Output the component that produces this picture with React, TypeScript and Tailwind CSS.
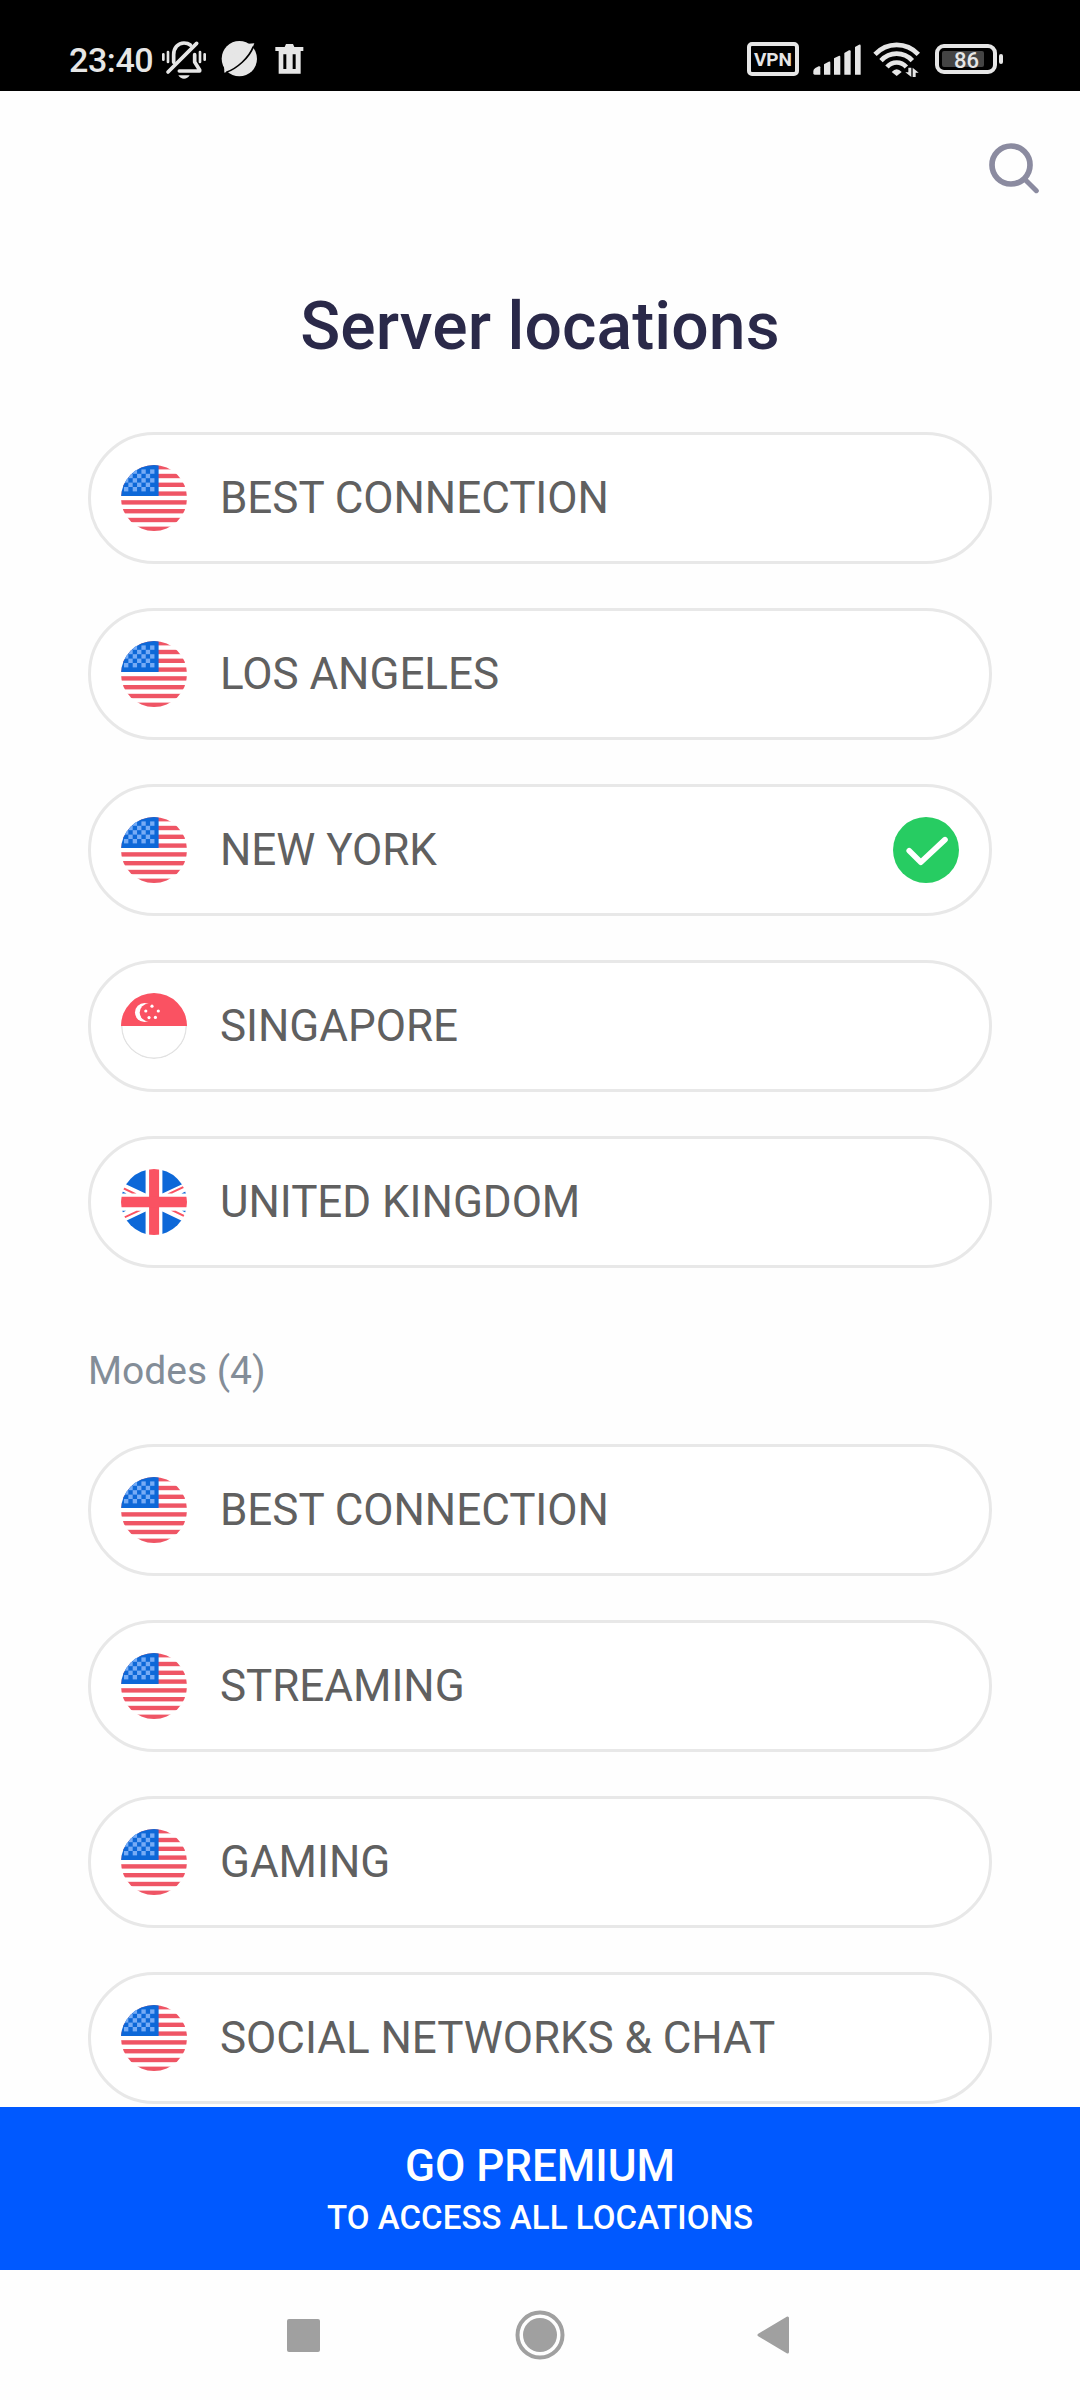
import React from 'react';

type Country = 'us' | 'sg' | 'uk';

interface Location {
  name: string;
  country: Country;
  selected?: boolean;
}

const locations: Location[] = [
  { name: 'BEST CONNECTION', country: 'us' },
  { name: 'LOS ANGELES', country: 'us' },
  { name: 'NEW YORK', country: 'us', selected: true },
  { name: 'SINGAPORE', country: 'sg' },
  { name: 'UNITED KINGDOM', country: 'uk' },
];

const modes: Location[] = [
  { name: 'BEST CONNECTION', country: 'us' },
  { name: 'STREAMING', country: 'us' },
  { name: 'GAMING', country: 'us' },
  { name: 'SOCIAL NETWORKS & CHAT', country: 'us' },
];

export default function App() {
  return (
    <div className="flex h-[2400px] w-[1080px] flex-col overflow-hidden bg-[#fefefe] font-['Roboto',sans-serif]">
      <StatusBar />

      {/* Toolbar */}
      <header className="flex h-[149px] shrink-0 justify-end pt-[52px] pr-[40px]">
        <svg className="h-[51px] w-[52px]" viewBox="0 0 52 51" fill="none" stroke="#8b8ba0" strokeLinecap="round">
          <circle cx="23" cy="22" r="19" strokeWidth="5.7" />
          <path d="M37.5 37 L48.3 47.7" strokeWidth="5" />
        </svg>
      </header>

      <main className="flex min-h-0 flex-1 flex-col overflow-hidden px-[88px]">
        <h1 className="mt-12 shrink-0 text-center text-[66px] leading-[78px] font-medium tracking-[0.1px] text-[#2a2949]">
          Server locations
        </h1>
        <div className="mt-[66px] flex flex-col gap-11">
          {locations.map((item) => (
            <LocationRow key={item.name} item={item} />
          ))}
        </div>

        <h2 className="mt-[77px] shrink-0 text-[39px] leading-[52px] text-[#838d98]">Modes (4)</h2>
        <div className="mt-[47px] flex flex-col gap-11">
          {modes.map((item) => (
            <LocationRow key={item.name} item={item} />
          ))}
        </div>
      </main>

      {/* Premium banner */}
      <button className="flex h-[163px] shrink-0 flex-col items-center bg-[#0059ff] pt-[33px] font-medium text-white">
        <span className="text-[44px] leading-[52px]">GO PREMIUM</span>
        <span className="mt-[6px] text-[33px] leading-[40px] tracking-[0.08px]">TO ACCESS ALL LOCATIONS</span>
      </button>

      <NavBar />
    </div>
  );
}

function LocationRow({ item }: { item: Location }) {
  return (
    <div className="flex h-[132px] shrink-0 items-center rounded-full border-3 border-[#e8e8e8] bg-white px-[30px]">
      <Flag country={item.country} />
      <span className="ml-[33px] flex-1 text-[44px] leading-[52px] tracking-[-0.04px] text-[#606060]">{item.name}</span>
      {item.selected && (
        <svg className="size-[66px]" viewBox="0 0 66 66" fill="none">
          <circle cx="33" cy="33" r="33" fill="#27cc62" />
          <path
            d="M16.2 33.8 L27.8 45.2 L52 22.6"
            stroke="white"
            strokeWidth="5.6"
            strokeLinecap="round"
            strokeLinejoin="round"
          />
        </svg>
      )}
    </div>
  );
}

function Flag({ country }: { country: Country }) {
  return (
    <div className="size-[66px] overflow-hidden rounded-full">
      {country === 'us' && <UsFlag />}
      {country === 'sg' && <SgFlag />}
      {country === 'uk' && <UkFlag />}
    </div>
  );
}

function UsFlag() {
  return (
    <svg className="size-full" viewBox="0 0 66 66">
      <rect width="66" height="66" fill="#fff" />
      {[0, 1, 2, 3, 4, 5, 6, 7].map((i) => (
        <rect key={i} y={i * 8.8} width="66" height="4.4" fill="#ef5565" />
      ))}
      <rect width="37.6" height="31" fill="#0d68d8" />
      {/* stars as a checkerboard */}
      {[0, 1, 2, 3, 4].map((row) =>
        (row % 2 === 0 ? [0, 2, 4, 6] : [1, 3, 5]).map((col) => (
          <rect key={`${row}-${col}`} x={3 + col * 4.35} y={4.4 + row * 4.4} width="4.35" height="4.4" fill="#76abf5" />
        ))
      )}
    </svg>
  );
}

function SgFlag() {
  return (
    <svg className="size-full" viewBox="0 0 66 66">
      <rect width="66" height="66" fill="#fff" />
      <rect width="66" height="33" fill="#fa5262" />
      <circle cx="23.6" cy="19.5" r="9.6" fill="#fff" />
      <circle cx="27.6" cy="19.5" r="8.9" fill="#fa5262" />
      <g fill="#fff">
        <circle cx="31" cy="13.2" r="1.6" />
        <circle cx="37.3" cy="18" r="1.6" />
        <circle cx="24.8" cy="18" r="1.6" />
        <circle cx="28" cy="24.6" r="1.6" />
        <circle cx="34.4" cy="24.4" r="1.6" />
      </g>
      <path d="M0.7 33 A32.3 32.3 0 0 0 65.3 33" fill="none" stroke="#e2e2e2" strokeWidth="1.4" />
    </svg>
  );
}

function UkFlag() {
  return (
    <svg className="size-full" viewBox="0 0 66 66">
      <rect width="66" height="66" fill="#fff" />
      <g fill="#0d68d8">
        <path d="M24.6 0 V24.6 L0 13 V0Z M41.4 0 V24.6 L66 13 V0Z" />
        <path d="M24.6 66 V42.6 L0 54.2 V66Z M41.4 66 V42.6 L66 54.2 V66Z" />
        <path d="M0 21.8 L5.6 24.4 H0Z M66 21.8 L60.4 24.4 H66Z M0 44.2 L5 41.8 H0Z M66 44.2 L61 41.8 H66Z" />
      </g>
      <g fill="#fa5262">
        <path d="M0 17 L15.6 24.4 H11 L0 19.2Z M66 15.2 L46.4 24.4 H51 L66 17.4Z" />
        <path d="M0 51 L20 41.8 H15.4 L0 48.9Z M66 49.4 L50 41.8 H54.6 L66 47.2Z" />
        <path d="M28.1 0 H38.1 V66 H28.1Z" />
        <path d="M0 27.8 H66 V38.2 H0Z" />
      </g>
    </svg>
  );
}

function StatusBar() {
  return (
    <div className="flex h-[91px] shrink-0 items-start justify-between bg-black pt-[40px] pr-[77px] pl-[69px] text-[#e6e6e6]">
      <div className="flex h-10 items-center">
        <span className="w-[93px] text-[34px] leading-10 font-medium tracking-[-0.4px]">23:40</span>

        {/* Muted bell */}
        <svg className="h-10 w-11" viewBox="336 60 132 120" fill="none" stroke="currentColor" strokeLinecap="round">
          <path d="M371 127 V104 C371 84 384 69 402 69 C410 69 416 71 421 75" strokeWidth="11" />
          <path d="M434 104 V126 L449 150 V153 H388" strokeWidth="11" strokeLinejoin="round" />
          <path d="M354 156 L440 70" strokeWidth="11" />
          <path d="M385 166 H419 C415 173 409 176 402 176 C395 176 389 173 385 166Z" fill="currentColor" stroke="none" />
          <path d="M340 103 V119 M354 96 V126 M450 96 V126 M464 103 V119" strokeWidth="8" />
        </svg>

        {/* Planet */}
        <svg className="ml-[15px] h-10 w-[37px]" viewBox="512 60 111 120">
          <circle cx="567" cy="116" r="53" fill="currentColor" />
          <path d="M521 126 L522 158 L550 148 L600 100 L612 70 L585 72Z" fill="currentColor" />
          <path d="M528 157 C560 145 596 114 609 80" fill="none" stroke="black" strokeWidth="5" />
        </svg>

        {/* Trash */}
        <svg className="ml-[17px] h-10 w-[30px]" viewBox="674 60 90 120">
          <path d="M675 81 H703 L707 72 H728 L732 81 H759 V93 H751 V161 H685 V93 H675Z" fill="currentColor" />
          <path d="M699 103 H708 V147 H699Z M727 103 H736 V147 H727Z" fill="black" />
        </svg>
      </div>

      <div className="flex h-10 items-center">
        <div className="mb-[2px] flex h-[34px] w-[52px] items-center justify-center rounded-[5px] border-4 border-current pt-px text-[19px] leading-none font-bold">
          VPN
        </div>

        {/* Signal */}
        <svg className="ml-[14px] h-10 w-12" viewBox="249 60 144 120" fill="currentColor">
          <path d="M250 153 Q250 148 256 144 L266 139 Q271 138 271 142 V164 H254 Q250 164 250 160Z" />
          <path d="M282 133 L296 125 Q301 123 301 128 V164 H282Z" />
          <path d="M312 115 L326 108 Q331 106 331 111 V164 H312Z" />
          <path d="M343 99 L357 91 Q362 89 362 94 V164 H343Z" />
          <path d="M375 81 L387 74 Q392 72 392 77 V164 H375Z" />
        </svg>

        {/* Wifi with traffic arrows */}
        <svg className="ml-[12px] h-10 w-[48px]" viewBox="430 60 144 120" fill="none" stroke="currentColor" strokeWidth="14">
          <path d="M436 103 C472 65 530 65 566 103" />
          <path d="M454 122 C480 94 522 94 548 122" />
          <path d="M472 141 C488 123 514 123 530 141" />
          <path d="M486 156 Q501 140 516 156 L501 168Z" fill="currentColor" stroke="none" />
          <path d="M545 143 V171 L527 157 H536 V143Z M549 171 V143 L567 158 H558 V171Z" fill="currentColor" stroke="none" />
        </svg>

        {/* Battery */}
        <div className="mb-[2px] ml-[14px] flex h-[30px] w-[62px] items-center rounded-[9px] border-4 border-current pl-[3px]">
          <div className="flex h-4 w-[42px] items-center justify-end rounded-[2px] bg-[#444] pt-[3px] pr-[5px] text-[22px] leading-none font-medium">
            86
          </div>
        </div>
        <div className="mb-[2px] ml-[2px] h-[10px] w-[4px] rounded-full bg-current" />
      </div>
    </div>
  );
}

function NavBar() {
  return (
    <nav className="flex h-[130px] shrink-0 items-center justify-between pr-[290px] pl-[287px] text-[#a0a0a0]">
      <div className="size-[33px] rounded-[2px] bg-current" />
      <svg className="ml-[3px] size-[50px]" viewBox="0 0 50 50">
        <circle cx="25" cy="25" r="22.5" fill="none" stroke="currentColor" strokeWidth="4" />
        <circle cx="25" cy="25" r="17" fill="currentColor" />
      </svg>
      <svg className="h-[38px] w-[33px]" viewBox="0 0 33 38">
        <path
          d="M30.5 2 V36 L2 19Z"
          fill="currentColor"
          stroke="currentColor"
          strokeWidth="3"
          strokeLinejoin="round"
        />
      </svg>
    </nav>
  );
}
